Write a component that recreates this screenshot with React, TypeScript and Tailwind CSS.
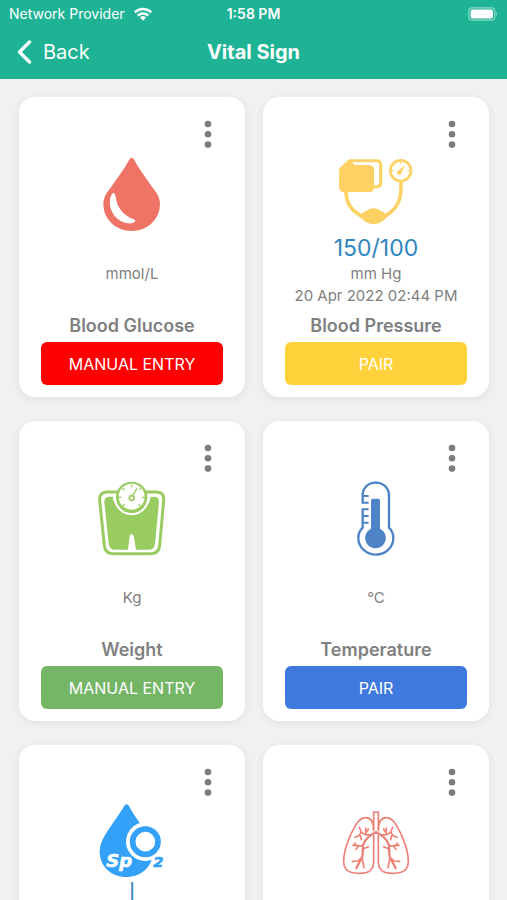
import React from 'react';

interface Vital {
  id: string;
  label: string;
  value?: string;
  unit?: string;
  date?: string;
  action?: string;
  buttonClass?: string;
  icon: React.ReactNode;
}

const GlucoseIcon = () => (
  <svg viewBox="42 48 228 228" className="h-19 w-19" aria-hidden="true">
    <path
      d="M155 53c-4 0-6 4-9 9-14 26-43 65-60 89-10 14-16 25-16 41 0 46 38 81 85 81s85-35 85-81c0-16-6-27-16-41-17-24-46-63-60-89-3-5-5-9-9-9z"
      fill="#ef7466"
    />
    <path
      d="M100 159c4 0 6 5 7 12 4 32 24 56 54 67 5 2 6 5 3 8-4 5-22 6-36 0-26-11-41-38-38-65 1-10 5-22 10-22z"
      fill="#fff"
    />
  </svg>
);

const PressureIcon = () => (
  <svg viewBox="54 48 228 228" className="h-19 w-19" aria-hidden="true">
    <path
      d="M78 154c0 38 18 58 48 75 22 14 46 14 68 0 34-19 49-44 49-84V120"
      fill="none"
      stroke="#fdd164"
      strokeWidth="11"
    />
    <path d="M115 224c22-5 28-19 46-19s24 14 46 19c-16 20-30 28-46 28s-30-8-46-28z" fill="#fdd164" />
    <path
      d="M90 62h80q12 0 12 12v54q0 12-12 12h-12"
      fill="none"
      stroke="#fdd164"
      strokeWidth="9"
      strokeLinejoin="round"
    />
    <path
      d="M57 91q0-6 5-10l20-19q5-5 13-4l6 16 50 2q11 2 11 13v53q0 14-12 14H72q-15 0-15-15z"
      fill="#fdd164"
    />
    <circle cx="242" cy="92" r="31" fill="#fff" stroke="#fdd164" strokeWidth="8" />
    <path
      d="M242 66v6M216 92h6M262 92h6M223 74l4 4"
      stroke="#fdd164"
      strokeWidth="3"
    />
    <path d="M255 74c-4 10-7 17-10 24a7 7 0 1 1-9-7c6-4 12-10 19-17z" fill="#fdd164" />
  </svg>
);

const WeightIcon = () => (
  <svg viewBox="42 45 228 228" className="h-19 w-19" aria-hidden="true">
    <path
      d="M82 81h146q25 0 23 25l-12 136q-2 24-26 24H99q-24 0-26-24L59 106q-2-25 23-25z"
      fill="#fff"
      stroke="#98cb60"
      strokeWidth="9"
    />
    <path
      d="M90 95h8c7 32 27 55 57 55s50-23 57-55h9q17 0 16 17l-12 124q-2 18-19 18h-38l-7-42q-6-10-12 0l-5 42h-39q-17 0-19-18L73 112q-1-17 17-17z"
      fill="#98cb60"
    />
    <path d="M98 92c5 34 28 58 57 58s52-24 57-58z" fill="#fff" />
    <circle cx="155" cy="97" r="47" fill="#98cb60" />
    <circle cx="155" cy="95" r="39" fill="#fff" />
    <circle cx="155" cy="99" r="7" fill="none" stroke="#98cb60" strokeWidth="5" />
    <path
      d="M158 92l13-22M155 60v7M115 97h9M186 97h9M128 70l5 5M182 70l-4 4M129 123l5-5M181 123l-5-5"
      fill="none"
      stroke="#98cb60"
      strokeWidth="4"
    />
  </svg>
);

const TemperatureIcon = () => (
  <svg viewBox="54 45 228 228" className="h-19 w-19" aria-hidden="true">
    <path
      d="M128 115V92c0-24 17-39 39-39s40 15 40 39v96c8 8 13 19 13 31 0 29-24 50-52 50s-53-21-53-50c0-12 5-23 13-31v-57"
      fill="none"
      stroke="#4f83c7"
      strokeWidth="7"
    />
    <path d="M126 93h20M126 113h20M126 133h20M126 153h20M126 173h20" stroke="#4f83c7" strokeWidth="6" />
    <path d="M153 107q0-6 6-6h15q6 0 6 6v84a31 31 0 1 1-27 0z" fill="#4f83c7" />
  </svg>
);

const OxygenIcon = () => (
  <svg viewBox="42 42 228 228" className="h-19 w-19" aria-hidden="true">
    <path
      d="M140 43c-5 0-7 5-11 11-16 28-38 53-54 81-10 17-16 32-16 50 0 44 36 76 80 76s80-32 80-76c0-18-7-34-17-51-16-28-37-53-52-80-3-6-5-11-10-11z"
      fill="#34a1f8"
    />
    <circle cx="196" cy="155" r="58" fill="#fff" />
    <path d="M214 204h50v40h-58q7-9 10-20z" fill="#fff" />
    <circle cx="196" cy="155" r="38" fill="none" stroke="#34a1f8" strokeWidth="17" />
    <g fontFamily="'DejaVu Sans', sans-serif" fontStyle="italic" fontWeight="700">
      <text x="79" y="230" fill="#fff" stroke="#fff" strokeWidth="2" fontSize="54">
        Sp
      </text>
      <text x="220" y="232" fill="#34a1f8" stroke="#34a1f8" strokeWidth="2" fontSize="44">
        2
      </text>
    </g>
  </svg>
);

const LungsIcon = () => (
  <svg viewBox="54 42 228 228" className="h-19 w-19" aria-hidden="true">
    <g fill="none" stroke="#ee8078" strokeWidth="5" strokeLinecap="round" strokeLinejoin="round">
      <path d="M161 122V66h14v56" />
      <path d="M161 136v77c0 26-16 37-39 37-34 0-51-8-51-36 0-33 18-78 35-107 10-17 21-24 31-24 14 0 23 12 24 35" />
      <path d="M175 136v77c0 26 16 37 39 37 34 0 51-8 51-36 0-33-18-78-35-107-10-17-21-24-31-24-14 0-23 12-24 35" />
      <path d="M168 127c-16 4-36 24-39 39-2 14 2 20-3 37l-17 31" strokeWidth="7" />
      <path d="M168 127c16 4 36 24 39 39 2 14-2 20 3 37l17 31" strokeWidth="7" />
      <path d="M147 134c-14 3-20-3-24-11l-5-11M124 126l-7 11-12 5M136 132l9-15M137 132v-18M121 137l3 12" />
      <path d="M189 134c14 3 20-3 24-11l5-11M212 126l7 11 12 5M200 132l-9-15M199 132v-18M215 137l-3 12" />
      <path d="M129 168l-30-2M116 167l-8 11M110 166l-6-6M129 177l16-7M126 202l6 31M125 204l-11 9-17 1" />
      <path d="M207 168l30-2M220 167l8 11M226 166l6-6M207 177l-16-7M210 202l-6 31M211 204l11 9 17 1" />
    </g>
  </svg>
);

const vitals: Vital[] = [
  {
    id: 'glucose',
    label: 'Blood Glucose',
    unit: 'mmol/L',
    action: 'MANUAL ENTRY',
    buttonClass: 'bg-[#fe0000]',
    icon: <GlucoseIcon />,
  },
  {
    id: 'pressure',
    label: 'Blood Pressure',
    value: '150/100',
    unit: 'mm Hg',
    date: '20 Apr 2022 02:44 PM',
    action: 'PAIR',
    buttonClass: 'bg-[#ffd23c]',
    icon: <PressureIcon />,
  },
  {
    id: 'weight',
    label: 'Weight',
    unit: 'Kg',
    action: 'MANUAL ENTRY',
    buttonClass: 'bg-[#74b566]',
    icon: <WeightIcon />,
  },
  {
    id: 'temperature',
    label: 'Temperature',
    unit: '°C',
    action: 'PAIR',
    buttonClass: 'bg-[#3f79e0]',
    icon: <TemperatureIcon />,
  },
  {
    id: 'oxygen',
    label: 'SpO2',
    value: '|',
    icon: <OxygenIcon />,
  },
  {
    id: 'lungs',
    label: 'Lungs',
    icon: <LungsIcon />,
  },
];

const VitalCard: React.FC<{ vital: Vital }> = ({ vital }) => (
  <article
    aria-label={vital.label}
    className="flex min-h-75 flex-col items-center rounded-2xl bg-white px-5.5 pt-5 pb-3 text-[#808080] shadow-[0_2px_8px_rgba(0,0,0,0.08)]"
  >
    <button type="button" aria-label={`${vital.label} options`} className="self-end px-[11px]">
      <svg viewBox="0 0 8 34" className="h-[34px] w-2" fill="#7d7d7d" aria-hidden="true">
        <circle cx="4" cy="7" r="3.3" />
        <circle cx="4" cy="17.3" r="3.3" />
        <circle cx="4" cy="27.6" r="3.3" />
      </svg>
    </button>
    <div className="mt-[5px]">{vital.icon}</div>
    <p className="h-8 text-[23px] leading-8 text-[#2f87bd]">{vital.value}</p>
    <p className="h-5 text-[15px] leading-5">{vital.unit}</p>
    <p className="h-6 text-[15px] leading-6 whitespace-nowrap">{vital.date}</p>
    {vital.action && (
      <>
        <h2 className="mt-0.5 text-lg leading-8 font-semibold">{vital.label}</h2>
        <button type="button" className={`h-[43px] w-full rounded-md text-base text-white ${vital.buttonClass}`}>
          {vital.action}
        </button>
      </>
    )}
  </article>
);

const App: React.FC = () => {
  return (
    <div className="flex h-screen flex-col bg-[#f1f1f1] font-['Inter',sans-serif]">
      <header className="bg-[#1db394] text-white">
        {/* Status bar */}
        <div className="grid grid-cols-3 items-center px-[9px] pt-1 text-sm leading-5">
          <div className="flex items-center gap-2 whitespace-nowrap">
            <span>Network Provider</span>
            <svg viewBox="0 0 20 15" className="h-3.5 w-5" aria-hidden="true">
              <g fill="none" stroke="#fff" strokeWidth="2.6">
                <path d="M1.2 5.8a12.6 12.6 0 0 1 17.6 0" />
                <path d="M4.4 9.2a8 8 0 0 1 11.2 0" />
              </g>
              <path d="M10 14.6l-3.2-3.3a4.6 4.6 0 0 1 6.4 0z" fill="#fff" />
            </svg>
          </div>
          <span className="text-center font-semibold">1:58 PM</span>
          <svg viewBox="0 0 30 14" className="h-3.5 w-7.5 justify-self-end" aria-hidden="true">
            <rect x="0.8" y="0.8" width="26" height="12.4" rx="3.5" fill="none" stroke="#8ed9c9" strokeWidth="1.2" />
            <rect x="2.6" y="2.6" width="22.4" height="8.8" rx="2" fill="#fff" />
            <path d="M28 5q2 2 0 4z" fill="#8ed9c9" />
          </svg>
        </div>

        {/* Navigation bar */}
        <div className="grid h-[55px] grid-cols-3 items-center px-4">
          <a href="#" className="flex items-center gap-[11px] text-xl">
            <svg viewBox="0 0 15 24" className="h-6 w-4" aria-hidden="true">
              <path
                d="M13 2L3 12l10 10"
                fill="none"
                stroke="#fff"
                strokeWidth="3.4"
                strokeLinecap="round"
                strokeLinejoin="round"
              />
            </svg>
            Back
          </a>
          <h1 className="text-center text-xl font-bold">Vital Sign</h1>
        </div>
      </header>

      <main className="min-h-0 flex-1 overflow-y-auto py-4.5 pr-[18px] pl-[19px] [scrollbar-width:none]">
        <div className="grid grid-cols-2 gap-x-4.5 gap-y-6">
          {vitals.map((vital) => (
            <VitalCard key={vital.id} vital={vital} />
          ))}
        </div>
      </main>
    </div>
  );
};

export default App;
